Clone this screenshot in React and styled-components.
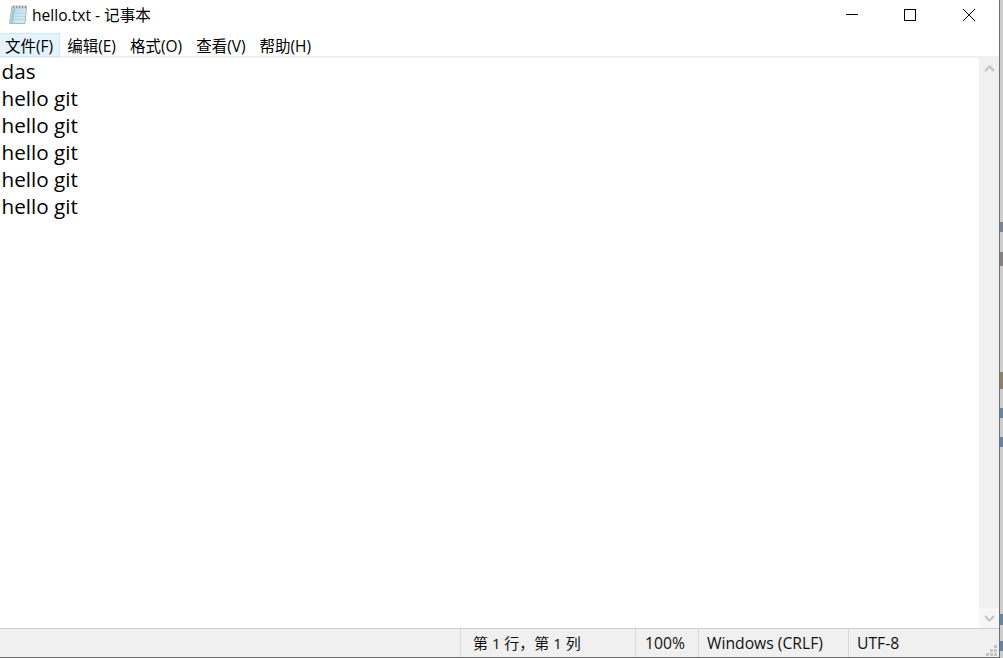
import React from 'react'
import styled, { createGlobalStyle } from 'styled-components'

const menus = ['文件(F)', '编辑(E)', '格式(O)', '查看(V)', '帮助(H)']
const lines = ['das', 'hello git', 'hello git', 'hello git', 'hello git', 'hello git']
const ticks = [
  { top: 222, height: 10, color: '#7b7f98' },
  { top: 252, height: 14, color: '#8a7f7f' },
  { top: 372, height: 17, color: '#8c8166' },
  { top: 408, height: 10, color: '#5f86a8' },
  { top: 437, height: 10, color: '#5f86a8' },
  { top: 614, height: 11, color: '#5f86a8' },
  { top: 641, height: 10, color: '#5f86a8' },
]

const NotepadIcon = () => (
  <svg width="20" height="20" viewBox="0 0 20 20">
    <defs>
      <linearGradient id="page" x1="0" y1="0.2" x2="1" y2="0.8">
        <stop offset="0" stopColor="#a4d6e4" />
        <stop offset="0.5" stopColor="#c4e4ee" />
        <stop offset="1" stopColor="#dcedf3" />
      </linearGradient>
    </defs>
    <path d="M4 1.5h14.5L17 18.5H1.5z" fill="url(#page)" stroke="#a9b8be" strokeWidth="1" />
    <path d="M3.5 8.5h14M3 11.5h14M2.6 14.5h14.2" stroke="#b6d8e2" strokeWidth="1" fill="none" />
    <path d="M4 18.5L6 2.5" stroke="#8fc9da" strokeWidth="2" fill="none" />
    <path d="M4 .5h14.5v3H4z" fill="#c3cbcf" />
    <path d="M5.5 1v2M8.5 1v2M11.5 1v2M14.5 1v2M17.5 1v2" stroke="#87929a" strokeWidth="1" />
  </svg>
)

const MinimizeIcon = () => (
  <svg width="12" height="12" viewBox="0 0 12 12" shapeRendering="crispEdges">
    <path d="M0 5.5h12" stroke="#000" strokeWidth="1" />
  </svg>
)

const MaximizeIcon = () => (
  <svg width="12" height="12" viewBox="0 0 12 12" shapeRendering="crispEdges">
    <path d="M.5.5h11v11H.5z" fill="none" stroke="#000" strokeWidth="1" />
  </svg>
)

const CloseIcon = () => (
  <svg width="12" height="12" viewBox="0 0 12 12">
    <path d="M0 0l12 12M12 0L0 12" stroke="#000" strokeWidth="1" />
  </svg>
)

const Chevron = ({ down }) => (
  <svg width="11" height="7" viewBox="0 0 11 7">
    <path d={down ? 'M1 1l4.5 4.5L10 1' : 'M1 6l4.5-4.5L10 6'} fill="none" stroke="#c2c2c2" strokeWidth="2" />
  </svg>
)

const ResizeGrip = () => (
  <svg width="11" height="11" viewBox="0 0 11 11">
    <path d="M8 0h3v3H8zM4 4h3v3H4zM8 4h3v3H8zM0 8h3v3H0zM4 8h3v3H4zM8 8h3v3H8z" fill="#c4c4c4" />
  </svg>
)

export default function App() {
  return (
    <>
      <GlobalStyle />
      <Page>
        <Window>
          <TitleBar>
            <TitleLeft>
              <NotepadIcon />
              <Title>hello.txt - 记事本</Title>
            </TitleLeft>
            <Controls>
              <ControlButton><MinimizeIcon /></ControlButton>
              <ControlButton><MaximizeIcon /></ControlButton>
              <ControlButton><CloseIcon /></ControlButton>
            </Controls>
          </TitleBar>
          <MenuBar>
            {menus.map((m, i) => (
              <MenuItem key={m} $active={i === 0}>{m}</MenuItem>
            ))}
          </MenuBar>
          <Body>
            <Editor>
              {lines.map((l, i) => (
                <Line key={i}>{l}</Line>
              ))}
            </Editor>
            <Scrollbar>
              <ScrollButton><Chevron /></ScrollButton>
              <ScrollButton $down><Chevron down /></ScrollButton>
            </Scrollbar>
          </Body>
          <StatusBar>
            <StatusCell $width={175} $pad={12} $size={15}>第 1 行，第 1 列</StatusCell>
            <StatusCell $width={63} $pad={9}>100%</StatusCell>
            <StatusCell $width={150} $pad={8}>Windows (CRLF)</StatusCell>
            <StatusCell $width={151} $pad={8}>UTF-8</StatusCell>
            <Grip><ResizeGrip /></Grip>
          </StatusBar>
        </Window>
        <BehindStrip>
          {ticks.map((t) => (
            <Tick key={t.top} $top={t.top} $height={t.height} $color={t.color} />
          ))}
        </BehindStrip>
      </Page>
    </>
  )
}

const GlobalStyle = createGlobalStyle`
  html, body {
    margin: 0;
    padding: 0;
    height: 100%;
    overflow: hidden;
    background: #fff;
  }
  #root {
    height: 100%;
  }
`

const Page = styled.div`
  display: flex;
  width: 1003px;
  height: 658px;
  font-family: "Open Sans", "Noto Sans CJK SC", sans-serif;
  color: #000;
`

const Window = styled.div`
  display: flex;
  flex-direction: column;
  width: 1000px;
  height: 658px;
  box-sizing: border-box;
  border-right: 1px solid #6e6e6e;
  border-bottom: 1px solid #6e6e6e;
  background: #fff;
`

const TitleBar = styled.div`
  display: flex;
  justify-content: space-between;
  height: 33px;
  flex: none;
`

const TitleLeft = styled.div`
  display: flex;
  align-items: center;
  gap: 4px;
  padding: 0 0 4px 8px;
`

const Title = styled.span`
  font-size: 15.6px;
  color: #000;
  margin-top: -1px;
`

const Controls = styled.div`
  display: flex;
  padding-right: 1px;
`

const ControlButton = styled.div`
  display: flex;
  align-items: center;
  justify-content: center;
  width: 58.5px;
  height: 29px;
`

const MenuBar = styled.div`
  display: flex;
  height: 23px;
  flex: none;
`

const MenuItem = styled.div`
  position: relative;
  display: flex;
  align-items: center;
  box-sizing: border-box;
  height: 24px;
  padding: 0 7px;
  font-size: 15.5px;
  background: ${(p) => (p.$active ? '#e5f3ff' : 'transparent')};
  border-top: 1px solid ${(p) => (p.$active ? '#cce8ff' : 'transparent')};
  border-bottom: 1px solid ${(p) => (p.$active ? '#cce8ff' : 'transparent')};
  &:first-child {
    padding: 0 6px 0 5px;
    border-right: 1px solid #cce8ff;
  }
`

const Body = styled.div`
  display: flex;
  flex: 1;
  min-height: 0;
  border-top: 2px solid #f0f0f0;
`

const Editor = styled.div`
  flex: 1;
  padding-left: 1.5px;
  font-size: 20.7px;
  line-height: 27px;
`

const Line = styled.div`
  height: 27px;
`

const Scrollbar = styled.div`
  display: flex;
  flex-direction: column;
  justify-content: space-between;
  width: 20px;
  flex: none;
  background: #f0f0f0;
`

const ScrollButton = styled.div`
  display: flex;
  align-items: center;
  justify-content: center;
  height: 20px;
  background: ${(p) => (p.$down ? '#f6f6f6' : '#f0f0f0')};
`

const StatusBar = styled.div`
  position: relative;
  display: flex;
  justify-content: flex-end;
  height: 29px;
  flex: none;
  box-sizing: border-box;
  border-top: 1px solid #cfcfcf;
  background: #f0f0f0;
`

const StatusCell = styled.div`
  display: flex;
  align-items: center;
  box-sizing: border-box;
  width: ${(p) => p.$width}px;
  padding: 0 0 1px ${(p) => p.$pad}px;
  font-size: ${(p) => p.$size || 15.7}px;
  color: #111;
  border-left: 1px solid #d9d9d9;
`

const Grip = styled.div`
  position: absolute;
  right: 2px;
  bottom: 1px;
  line-height: 0;
`

const BehindStrip = styled.div`
  position: relative;
  flex: 1;
  background: #cdcdcd;
`

const Tick = styled.div`
  position: absolute;
  left: 0;
  top: ${(p) => p.$top}px;
  width: 3px;
  height: ${(p) => p.$height}px;
  background: ${(p) => p.$color};
`
